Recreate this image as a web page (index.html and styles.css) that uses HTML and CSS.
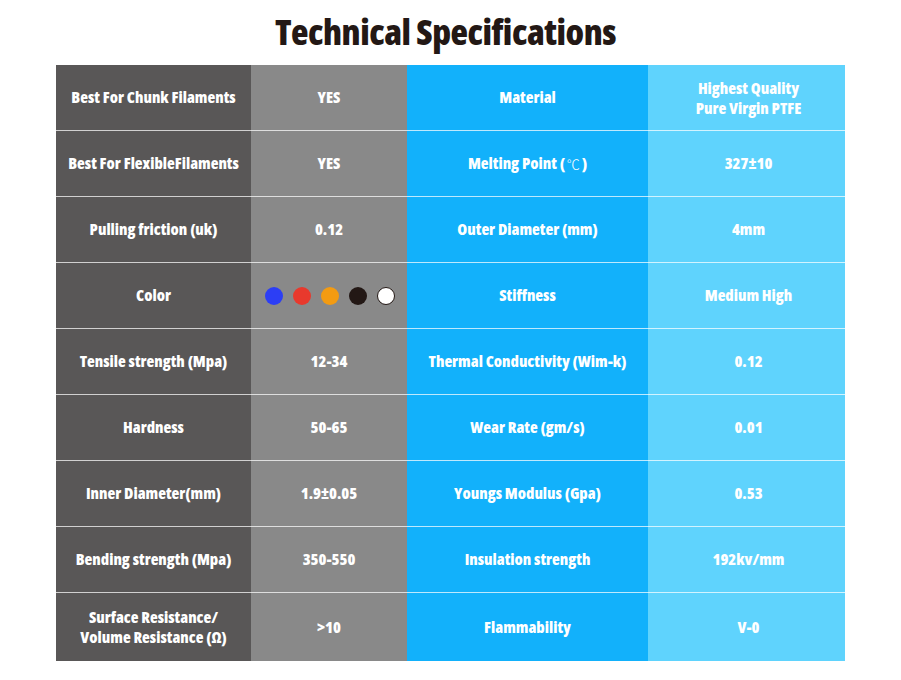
FILE: index.html
```html
<!DOCTYPE html>
<html lang="en">
<head>
<meta charset="utf-8">
<title>Technical Specifications</title>
<link rel="stylesheet" href="styles.css">
</head>
<body>
<h1 class="title">Technical Specifications</h1>
<div class="specs">
  <div class="cell c1">Best For Chunk Filaments</div>
  <div class="cell c2">YES</div>
  <div class="cell c3">Material</div>
  <div class="cell c4 two">Highest Quality<br>Pure Virgin PTFE</div>

  <div class="cell c1">Best For FlexibleFilaments</div>
  <div class="cell c2">YES</div>
  <div class="cell c3">Melting Point (<span class="thin">℃</span>)</div>
  <div class="cell c4">327±10</div>

  <div class="cell c1">Pulling friction (uk)</div>
  <div class="cell c2">0.12</div>
  <div class="cell c3">Outer Diameter (mm)</div>
  <div class="cell c4">4mm</div>

  <div class="cell c1">Color</div>
  <div class="cell c2">
    <div class="dots">
      <span class="dot blue"></span>
      <span class="dot red"></span>
      <span class="dot orange"></span>
      <span class="dot black"></span>
      <span class="dot white"></span>
    </div>
  </div>
  <div class="cell c3">Stiffness</div>
  <div class="cell c4">Medium High</div>

  <div class="cell c1">Tensile strength (Mpa)</div>
  <div class="cell c2">12-34</div>
  <div class="cell c3">Thermal Conductivity (Wim-k)</div>
  <div class="cell c4">0.12</div>

  <div class="cell c1">Hardness</div>
  <div class="cell c2">50-65</div>
  <div class="cell c3">Wear Rate (gm/s)</div>
  <div class="cell c4">0.01</div>

  <div class="cell c1">Inner Diameter(mm)</div>
  <div class="cell c2">1.9±0.05</div>
  <div class="cell c3">Youngs Modulus (Gpa)</div>
  <div class="cell c4">0.53</div>

  <div class="cell c1">Bending strength (Mpa)</div>
  <div class="cell c2">350-550</div>
  <div class="cell c3">Insulation strength</div>
  <div class="cell c4">192kv/mm</div>

  <div class="cell c1 two">Surface Resistance/<br>Volume Resistance (Ω)</div>
  <div class="cell c2">&gt;10</div>
  <div class="cell c3">Flammability</div>
  <div class="cell c4">V-0</div>
</div>
</body>
</html>
```
FILE: styles.css
```css
html, body {
  margin: 0;
  padding: 0;
  background: #ffffff;
}

body {
  width: 901px;
  height: 680px;
  font-family: "Open Sans", "Liberation Sans Narrow", "DejaVu Sans Condensed", sans-serif;
  font-stretch: 75%;
  font-weight: 800;
}

.title {
  margin: 0;
  height: 65px;
  display: flex;
  align-items: center;
  justify-content: center;
  padding-right: 10px;
  padding-bottom: 2px;
  box-sizing: border-box;
  font-size: 36px;
  font-weight: 800;
  color: #231815;
  letter-spacing: -0.5px;
}

.specs {
  margin-left: 56px;
  width: 789px;
  display: grid;
  grid-template-columns: 195px 156px 241px 197px;
  grid-template-rows: 65px repeat(7, 66px) 69px;
}

.cell {
  display: flex;
  align-items: center;
  justify-content: center;
  text-align: center;
  color: #ffffff;
  font-size: 16px;
  line-height: 19px;
  box-sizing: border-box;
  border-top: 1px solid rgba(255, 255, 255, 0.72);
}

.cell.two {
  line-height: 20px;
}

.cell:nth-child(-n+4) {
  border-top: none;
}

.c1 { background: #595757; }
.c2 { background: #898989; }
.c3 { background: #12b1fb; }
.c4 { background: #5fd3fd; padding-left: 4px; }

.thin {
  font-weight: 300;
  font-family: "Noto Sans CJK SC", sans-serif;
  font-size: 13px;
  padding: 0 2px;
}

.dots {
  display: flex;
  gap: 10px;
  margin-left: 2px;
}

.dot {
  width: 18px;
  height: 18px;
  border-radius: 50%;
  box-sizing: border-box;
}

.blue { background: #2c3ef5; }
.red { background: #e8392d; }
.orange { background: #f39b12; }
.black { background: #231815; }
.white { background: #ffffff; border: 1px solid #231815; }
```
